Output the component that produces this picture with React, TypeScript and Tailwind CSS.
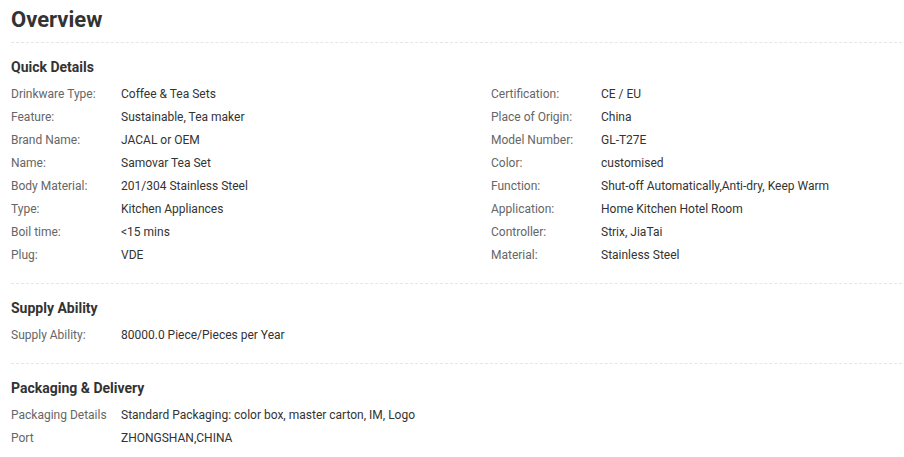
const quickLeft: [string, string][] = [
  ["Drinkware Type:", "Coffee & Tea Sets"],
  ["Feature:", "Sustainable, Tea maker"],
  ["Brand Name:", "JACAL or OEM"],
  ["Name:", "Samovar Tea Set"],
  ["Body Material:", "201/304 Stainless Steel"],
  ["Type:", "Kitchen Appliances"],
  ["Boil time:", "<15 mins"],
  ["Plug:", "VDE"],
];

const quickRight: [string, string][] = [
  ["Certification:", "CE / EU"],
  ["Place of Origin:", "China"],
  ["Model Number:", "GL-T27E"],
  ["Color:", "customised"],
  ["Function:", "Shut-off Automatically,Anti-dry, Keep Warm"],
  ["Application:", "Home Kitchen Hotel Room"],
  ["Controller:", "Strix, JiaTai"],
  ["Material:", "Stainless Steel"],
];

const Row = ({ label, value }: { label: string; value: string }) => (
  <div className="flex h-[23px] leading-[23px] text-[12px]">
    <span className="w-[110px] shrink-0 text-[#666]">{label}</span>
    <span className="text-[#333]">{value}</span>
  </div>
);

const Section = ({ title, children }: { title: string; children: React.ReactNode }) => (
  <div className="border-t border-dashed border-[#e6e6e6] pt-[14px] pb-[16px]">
    <h3 className="h-[20px] leading-[20px] text-[14px] font-bold text-[#333] mb-[6px]">{title}</h3>
    {children}
  </div>
);

export default function App() {
  return (
    <div className="w-[904px] h-[457px] bg-white pl-[11px] pr-[2px] font-['Roboto',sans-serif] overflow-hidden">
      <h2 className="pt-[6px] pb-[8px] text-[22px] leading-[28px] font-bold text-[#333]">Overview</h2>

      <Section title="Quick Details">
        <div className="flex">
          <div className="w-[480px]">
            {quickLeft.map(([l, v]) => (
              <Row key={l} label={l} value={v} />
            ))}
          </div>
          <div className="flex-1">
            {quickRight.map(([l, v]) => (
              <Row key={l} label={l} value={v} />
            ))}
          </div>
        </div>
      </Section>

      <Section title="Supply Ability">
        <Row label="Supply Ability:" value="80000.0 Piece/Pieces per Year" />
      </Section>

      <Section title="Packaging & Delivery">
        <Row label="Packaging Details" value="Standard Packaging: color box, master carton, IM, Logo" />
        <Row label="Port" value="ZHONGSHAN,CHINA" />
      </Section>
    </div>
  );
}
